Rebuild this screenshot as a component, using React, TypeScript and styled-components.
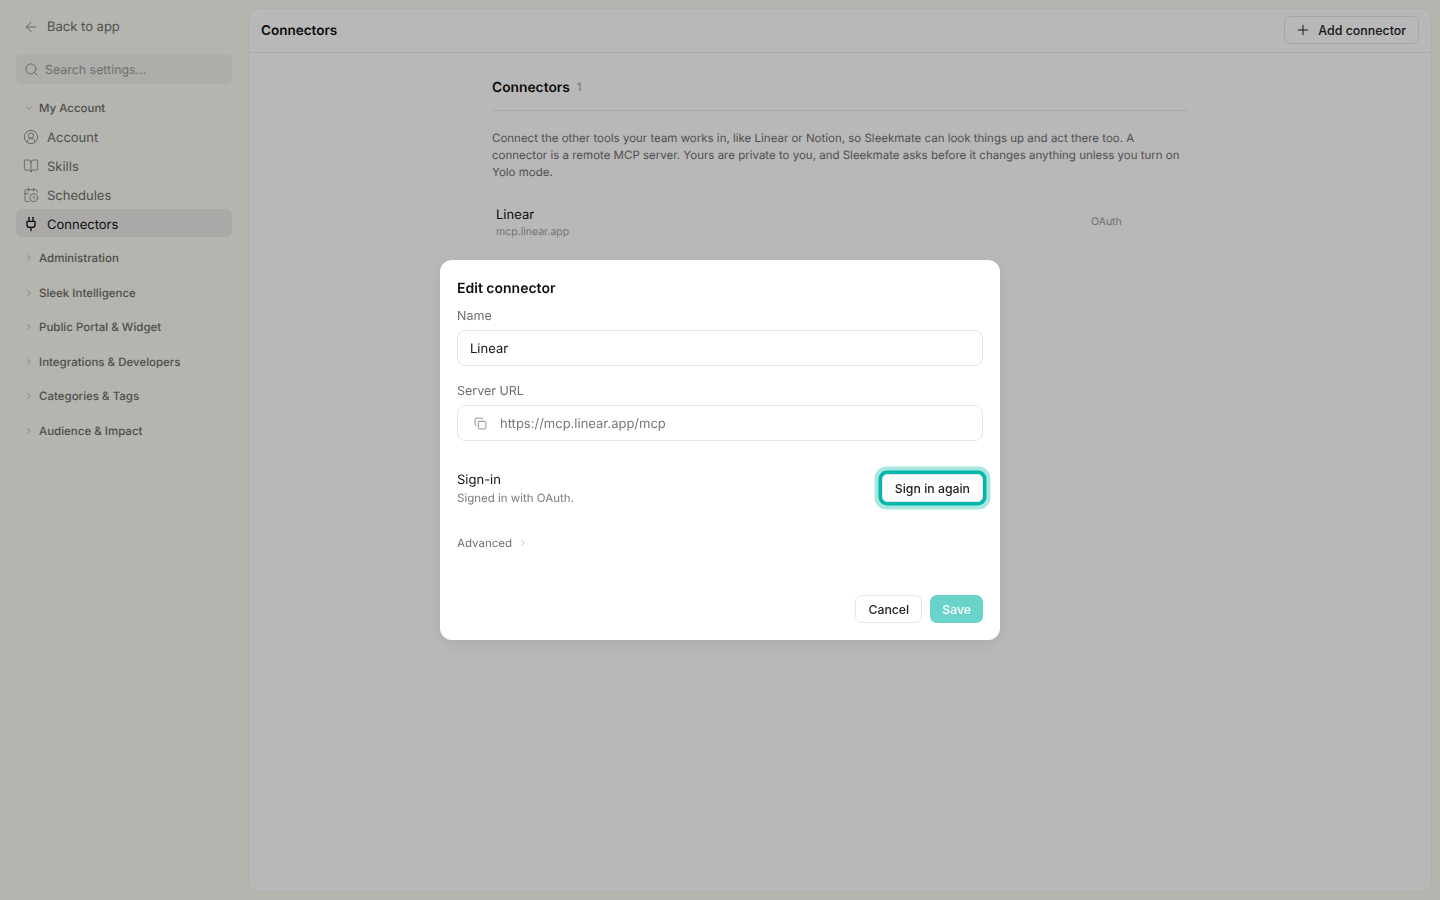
import React from 'react';
import styled, { createGlobalStyle } from 'styled-components';
import {
  ArrowLeft,
  BookOpen,
  CalendarClock,
  ChevronDown,
  ChevronRight,
  CircleUserRound,
  Copy,
  Plug,
  Plus,
  Search,
} from 'lucide-react';

const GlobalStyle = createGlobalStyle`
  html, body {
    margin: 0;
    height: 100%;
  }
  body {
    font-family: Inter, "Liberation Sans", sans-serif;
    color: #111;
    overflow: hidden;
    text-rendering: geometricPrecision;
  }
  * {
    box-sizing: border-box;
  }
`;

const Page = styled.div`
  display: flex;
  width: 1440px;
  height: 900px;
  background: #fafbf2;
`;

const Sidebar = styled.aside`
  width: 249px;
  flex-shrink: 0;
  padding: 0 17px 0 16px;
`;

const BackLink = styled.div`
  display: flex;
  align-items: center;
  gap: 8.5px;
  height: 24px;
  margin-top: 14.5px;
  padding-left: 6.5px;
  font-size: 13px;
  color: #6f6f6f;
  svg {
    color: #8a8a8a;
  }
`;

const SearchBox = styled.div`
  display: flex;
  align-items: center;
  gap: 6px;
  height: 30px;
  margin-top: 15.5px;
  padding-left: 8px;
  border-radius: 6px;
  background: #f0f0ea;
  font-size: 12.4px;
  color: #9c9c9c;
  svg {
    color: #8c8c8c;
  }
`;

const Group = styled.div`
  display: flex;
  align-items: center;
  gap: 5px;
  height: 20px;
  padding-left: 8px;
  font-size: 11.5px;
  font-weight: 500;
  color: #6d6d6d;
  svg {
    color: #8a8a8a;
  }
`;

const OpenGroup = styled(Group)`
  margin-top: 13.5px;
`;

const NavList = styled.nav`
  display: flex;
  flex-direction: column;
  gap: 1px;
  margin-top: 4.5px;
`;

const NavItem = styled.div<{ $active?: boolean }>`
  display: flex;
  align-items: center;
  gap: 8px;
  height: 28px;
  padding: 4px 0 0 7px;
  border-radius: 6px;
  font-size: 13px;
  background: ${(p) => (p.$active ? '#ecebe8' : 'transparent')};
  color: ${(p) => (p.$active ? '#111' : '#6f6f6f')};
  svg {
    margin-top: -2px;
    color: ${(p) => (p.$active ? '#111' : '#8a8a8a')};
  }
`;

const GroupList = styled.div`
  display: flex;
  flex-direction: column;
  gap: 14.6px;
  margin-top: 11.1px;
`;

const Main = styled.main`
  width: 1182px;
  height: 882px;
  margin-top: 9px;
  border-radius: 10px;
  background: #fff;
  box-shadow: 0 0 0 1px rgba(0, 0, 0, 0.02);
`;

const Header = styled.header`
  display: flex;
  align-items: center;
  justify-content: space-between;
  height: 44px;
  padding: 0 12px 1px;
  border-bottom: 1px solid #eeeeee;
`;

const HeaderTitle = styled.div`
  padding-top: 2px;
  font-size: 13.5px;
  font-weight: 600;
`;

const AddButton = styled.button`
  display: flex;
  align-items: center;
  gap: 7px;
  height: 28px;
  padding: 0 12px 0 10px;
  border: 1px solid #e4e4e4;
  border-radius: 7px;
  background: #fff;
  font: 500 12.4px Inter, sans-serif;
  color: #222;
`;

const Content = styled.section`
  width: 696px;
  margin: 0 auto;
`;

const SectionHead = styled.div`
  display: flex;
  align-items: center;
  gap: 7px;
  height: 58px;
  padding-top: 13px;
  border-bottom: 1px solid #eaeaea;
`;

const SectionTitle = styled.h2`
  margin: 0;
  font-size: 13.8px;
  font-weight: 600;
`;

const Count = styled.span`
  margin-bottom: 2px;
  font-size: 11.5px;
  color: #a0a0a0;
`;

const Intro = styled.p`
  margin: 19px 0 0;
  font-size: 11.5px;
  line-height: 17px;
  color: #6e6e6e;
`;

const ConnectorRow = styled.div`
  display: flex;
  align-items: center;
  margin-top: 24px;
  padding-left: 4px;
`;

const ConnectorInfo = styled.div`
  width: 595px;
`;

const ConnectorName = styled.div`
  margin-top: 1px;
  font-size: 13px;
  line-height: 18px;
`;

const ConnectorHost = styled.div`
  font-size: 10.5px;
  line-height: 16px;
  color: #a0a0a0;
`;

const ConnectorAuth = styled.div`
  margin-bottom: 2px;
  font-size: 10.5px;
  color: #9a9a9a;
`;

const Overlay = styled.div`
  position: fixed;
  inset: 0;
  display: flex;
  align-items: center;
  justify-content: center;
  background: rgba(0, 0, 0, 0.28);
`;

const Dialog = styled.div`
  width: 560px;
  height: 380px;
  display: flex;
  flex-direction: column;
  padding: 20px 17px 17px;
  border-radius: 12px;
  background: #fff;
  box-shadow: 0 4px 16px rgba(0, 0, 0, 0.08);
`;

const DialogTitle = styled.h3`
  margin: 0 0 10px;
  font-size: 14px;
  line-height: 18px;
  font-weight: 600;
`;

const FieldLabel = styled.label`
  display: block;
  margin-bottom: 4px;
  font-size: 12.5px;
  line-height: 18px;
  color: #6f6f6f;
`;

const Field = styled.div<{ $muted?: boolean }>`
  display: flex;
  align-items: center;
  gap: 13px;
  height: 36px;
  margin-bottom: 17px;
  padding: 2px 0 0 ${(p) => (p.$muted ? '16px' : '12px')};
  border: 1px solid #e6e6e6;
  border-radius: 8px;
  font-size: 13px;
  color: ${(p) => (p.$muted ? '#777' : '#111')};
  svg {
    margin-top: -2px;
    color: #777;
  }
`;

const SignInRow = styled.div`
  display: flex;
  align-items: center;
  justify-content: space-between;
  margin-top: 11px;
`;

const SignInTitle = styled.div`
  margin-top: 1px;
  font-size: 13px;
  line-height: 20px;
`;

const SignInNote = styled.div`
  font-size: 11.5px;
  line-height: 16px;
  color: #7a7a7a;
`;

const Button = styled.button`
  height: 28px;
  padding: 0 12px;
  border: 1px solid #e6e6e6;
  border-radius: 7px;
  background: #fff;
  font: 500 12.3px Inter, sans-serif;
  color: #222;
`;

const FocusButton = styled(Button)`
  padding-top: 2px;
  border-radius: 5px;
  box-shadow: 0 0 0 3.5px #00b8a9, 0 0 0 7.5px #a8e6df;
`;

const Advanced = styled.div`
  display: flex;
  align-items: center;
  gap: 6px;
  margin-top: 29px;
  font-size: 11.5px;
  line-height: 16px;
  color: #6f6f6f;
  svg {
    color: #999;
  }
`;

const Footer = styled.div`
  display: flex;
  justify-content: flex-end;
  gap: 8px;
  margin-top: auto;
`;

const SaveButton = styled(Button)`
  border: none;
  background: #69d3c9;
  color: #fff;
`;

const navItems = [
  { label: 'Account', icon: CircleUserRound },
  { label: 'Skills', icon: BookOpen },
  { label: 'Schedules', icon: CalendarClock },
  { label: 'Connectors', icon: Plug, active: true },
];

const groups = [
  'Administration',
  'Sleek Intelligence',
  'Public Portal & Widget',
  'Integrations & Developers',
  'Categories & Tags',
  'Audience & Impact',
];

export default function App() {
  return (
    <Page>
      <GlobalStyle />
      <Sidebar>
        <BackLink>
          <ArrowLeft size={16} strokeWidth={1.5} />
          Back to app
        </BackLink>
        <SearchBox>
          <Search size={15} strokeWidth={1.5} />
          Search settings...
        </SearchBox>
        <OpenGroup>
          <ChevronDown size={10} strokeWidth={1.5} />
          My Account
        </OpenGroup>
        <NavList>
          {navItems.map((item) => (
            <NavItem key={item.label} $active={item.active}>
              <item.icon size={16} strokeWidth={item.active ? 2 : 1.4} />
              {item.label}
            </NavItem>
          ))}
        </NavList>
        <GroupList>
          {groups.map((g) => (
            <Group key={g}>
              <ChevronRight size={10} strokeWidth={1.5} />
              {g}
            </Group>
          ))}
        </GroupList>
      </Sidebar>

      <Main>
        <Header>
          <HeaderTitle>Connectors</HeaderTitle>
          <AddButton>
            <Plus size={16} strokeWidth={1.5} />
            Add connector
          </AddButton>
        </Header>
        <Content>
          <SectionHead>
            <SectionTitle>Connectors</SectionTitle>
            <Count>1</Count>
          </SectionHead>
          <Intro>
            Connect the other tools your team works in, like Linear or Notion, so Sleekmate can look things up and act
            there too. A connector is a remote MCP server. Yours are private to you, and Sleekmate asks before it
            changes anything unless you turn on Yolo mode.
          </Intro>
          <ConnectorRow>
            <ConnectorInfo>
              <ConnectorName>Linear</ConnectorName>
              <ConnectorHost>mcp.linear.app</ConnectorHost>
            </ConnectorInfo>
            <ConnectorAuth>OAuth</ConnectorAuth>
          </ConnectorRow>
        </Content>
      </Main>

      <Overlay>
        <Dialog>
          <DialogTitle>Edit connector</DialogTitle>
          <FieldLabel>Name</FieldLabel>
          <Field>Linear</Field>
          <FieldLabel>Server URL</FieldLabel>
          <Field $muted>
            <Copy size={13} strokeWidth={1.5} />
            https://mcp.linear.app/mcp
          </Field>
          <SignInRow>
            <div>
              <SignInTitle>Sign-in</SignInTitle>
              <SignInNote>Signed in with OAuth.</SignInNote>
            </div>
            <FocusButton>Sign in again</FocusButton>
          </SignInRow>
          <Advanced>
            Advanced
            <ChevronRight size={10} strokeWidth={1.5} />
          </Advanced>
          <Footer>
            <Button>Cancel</Button>
            <SaveButton>Save</SaveButton>
          </Footer>
        </Dialog>
      </Overlay>
    </Page>
  );
}
